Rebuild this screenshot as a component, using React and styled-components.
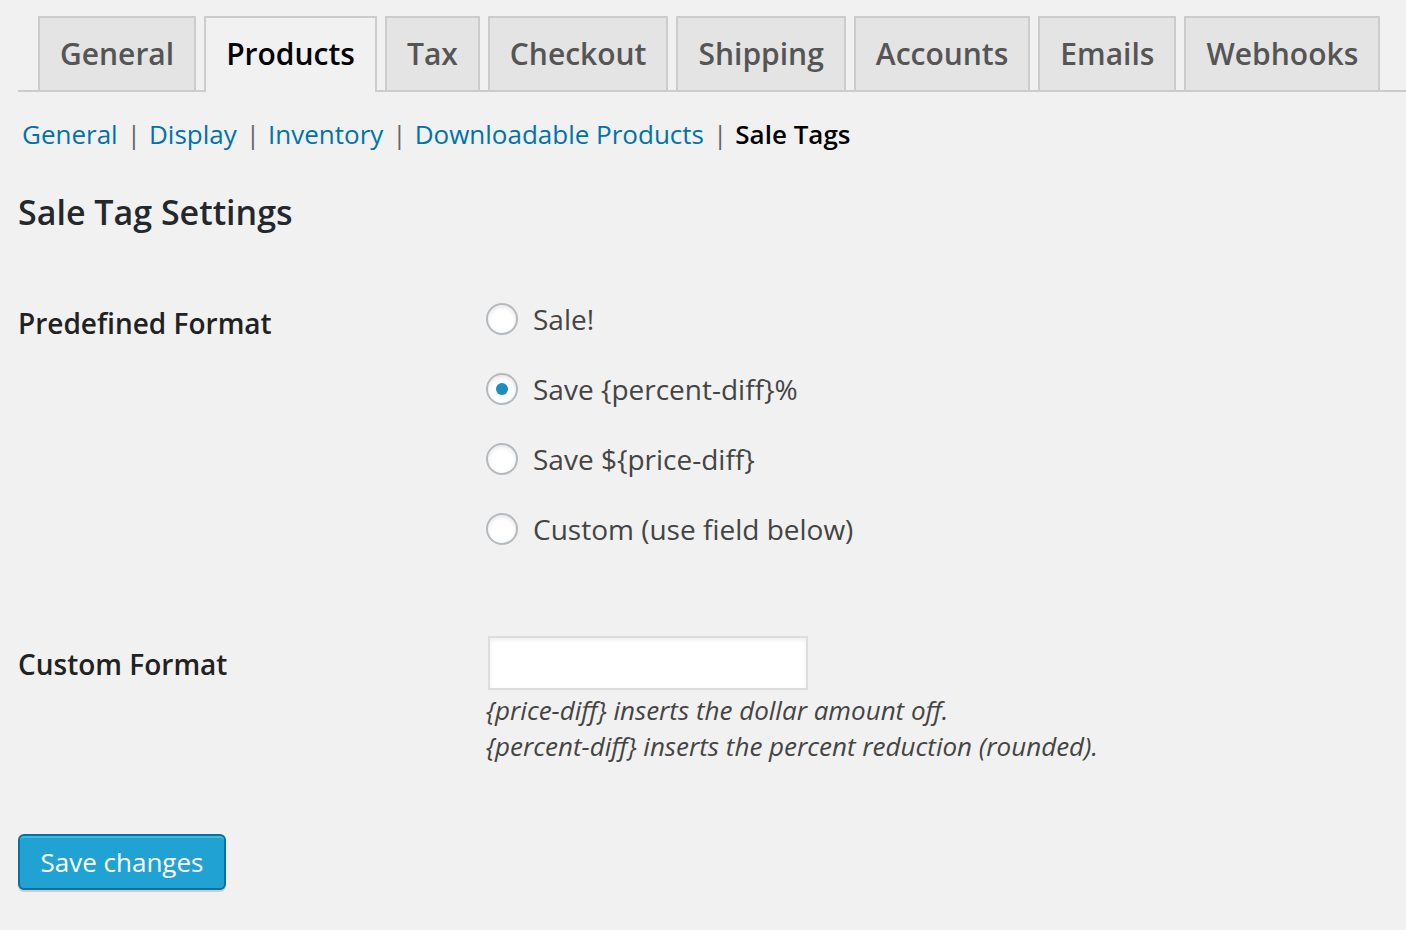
import React, { useState } from 'react';
import styled, { createGlobalStyle } from 'styled-components';

const Global = createGlobalStyle`
    body {
        margin: 0;
        background: #f1f1f1;
        font-family: "Open Sans", "Liberation Sans", sans-serif;
        color: #444;
    }
`;

const Page = styled.div`
    padding: 16px 0 40px 18px;
`;

const TabBar = styled.div`
    display: flex;
    gap: 8px;
    padding-left: 20px;
    border-bottom: 2px solid #ccc;
`;

const Tab = styled.a`
    display: block;
    padding: 12px 20px;
    line-height: 48px;
    font-size: 30px;
    font-weight: 600;
    text-decoration: none;
    border: 2px solid #ccc;
    border-bottom: none;
    background: ${p => (p.$active ? '#f1f1f1' : '#e4e4e4')};
    color: ${p => (p.$active ? '#000' : '#555')};
    margin-bottom: ${p => (p.$active ? '-2px' : '0')};
    padding-bottom: ${p => (p.$active ? '14px' : '12px')};
    cursor: pointer;
`;

const SubNav = styled.ul`
    display: flex;
    margin: 22px 0 0;
    padding: 0 0 0 4px;
    list-style: none;
    font-size: 26px;
    line-height: 40px;
`;

const SubItem = styled.li`
    display: flex;
    color: #666;

    & + &::before {
        content: "|";
        padding: 0 8px 0 9px;
    }
`;

const SubLink = styled.a`
    color: ${p => (p.$current ? '#000' : '#0073aa')};
    font-weight: ${p => (p.$current ? 600 : 400)};
    text-decoration: none;
`;

const Heading = styled.h2`
    margin: 36px 0 0;
    font-size: 34px;
    line-height: 44px;
    font-weight: 600;
    color: #23282d;
`;

const FormRow = styled.div`
    display: grid;
    grid-template-columns: 468px 1fr;
    margin-top: ${p => p.$top}px;
`;

const Label = styled.div`
    font-size: 28px;
    line-height: 40px;
    font-weight: 600;
    color: #222;
    padding-top: ${p => p.$pad}px;
`;

const Options = styled.div`
    display: flex;
    flex-direction: column;
`;

const Option = styled.label`
    display: flex;
    align-items: center;
    gap: 15px;
    height: 70px;
    font-size: 28px;
    color: #444;
    cursor: pointer;
`;

const Radio = styled.span`
    width: 32px;
    height: 32px;
    box-sizing: border-box;
    border: 2px solid #b4b9be;
    border-radius: 50%;
    background: #fff;
    box-shadow: inset 0 2px 4px rgba(0, 0, 0, 0.1);
    display: flex;
    align-items: center;
    justify-content: center;

    &::after {
        content: "";
        display: ${p => (p.$checked ? 'block' : 'none')};
        width: 12px;
        height: 12px;
        border-radius: 50%;
        background: #1e8cbe;
    }
`;

const Field = styled.div`
    padding-left: 2px;
`;

const Input = styled.input`
    display: block;
    width: 320px;
    height: 54px;
    box-sizing: border-box;
    border: 2px solid #ddd;
    background: #fff;
    box-shadow: inset 0 2px 4px rgba(0, 0, 0, 0.07);
    font-family: inherit;
    font-size: 28px;
    outline: none;
`;

const Desc = styled.p`
    margin: 2px 0 0 -2px;
    font-size: 26px;
    line-height: 36px;
    font-style: italic;
    color: #444;
`;

const SaveButton = styled.button`
    display: block;
    margin-top: 70px;
    height: 56px;
    padding: 0 20.5px;
    font-family: inherit;
    font-size: 26px;
    color: #fff;
    background: #20a3d3;
    border: 2px solid #0074a2;
    border-radius: 6px;
    box-shadow: inset 0 2px 0 rgba(120, 200, 230, 0.5), 0 2px 0 rgba(0, 0, 0, 0.15);
    cursor: pointer;
`;

const tabs = ['General', 'Products', 'Tax', 'Checkout', 'Shipping', 'Accounts', 'Emails', 'Webhooks'];
const sections = ['General', 'Display', 'Inventory', 'Downloadable Products', 'Sale Tags'];
const formats = ['Sale!', 'Save {percent-diff}%', 'Save ${price-diff}', 'Custom (use field below)'];

export default function App() {
    const [format, setFormat] = useState(1);

    return (
        <Page>
            <Global />
            <TabBar>
                {tabs.map(t => (
                    <Tab key={t} $active={t === 'Products'}>{t}</Tab>
                ))}
            </TabBar>
            <SubNav>
                {sections.map(s => (
                    <SubItem key={s}>
                        <SubLink $current={s === 'Sale Tags'}>{s}</SubLink>
                    </SubItem>
                ))}
            </SubNav>
            <Heading>Sale Tag Settings</Heading>

            <FormRow $top={50}>
                <Label $pad={19}>Predefined Format</Label>
                <Options>
                    {formats.map((f, i) => (
                        <Option key={f} onClick={() => setFormat(i)}>
                            <Radio $checked={format === i} />
                            {f}
                        </Option>
                    ))}
                </Options>
            </FormRow>

            <FormRow $top={72}>
                <Label $pad={8}>Custom Format</Label>
                <Field>
                    <Input type="text" />
                    <Desc>
                        {'{price-diff} inserts the dollar amount off.'}<br />
                        {'{percent-diff} inserts the percent reduction (rounded).'}
                    </Desc>
                </Field>
            </FormRow>

            <SaveButton>Save changes</SaveButton>
        </Page>
    );
}
